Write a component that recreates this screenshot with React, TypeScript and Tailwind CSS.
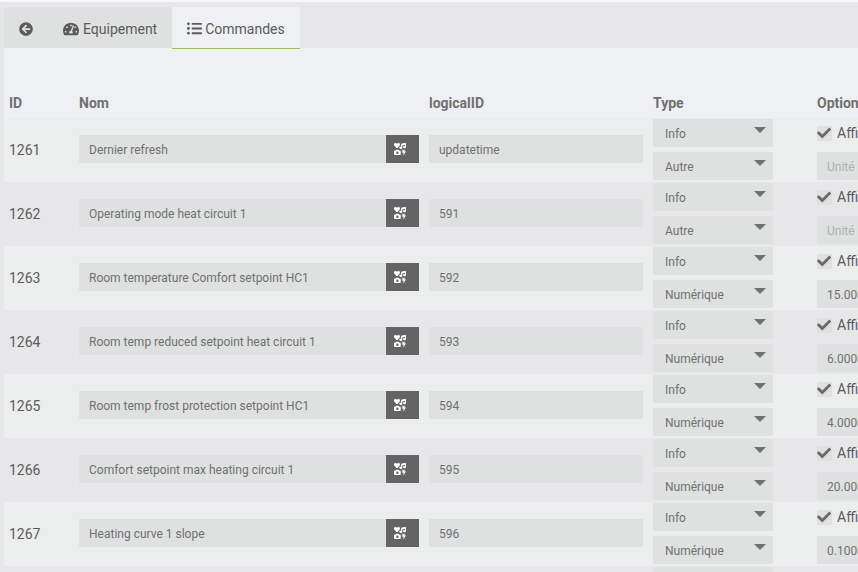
import { FaArrowCircleLeft, FaCheck, FaIcons, FaListUl, FaTachometerAlt } from "react-icons/fa";

type Command = {
  id: number;
  name: string;
  logicalId: string;
  subType: string;
  value: string;
};

const commands: Command[] = [
  { id: 1261, name: "Dernier refresh", logicalId: "updatetime", subType: "Autre", value: "" },
  { id: 1262, name: "Operating mode heat circuit 1", logicalId: "591", subType: "Autre", value: "" },
  { id: 1263, name: "Room temperature Comfort setpoint HC1", logicalId: "592", subType: "Numérique", value: "15.0000" },
  { id: 1264, name: "Room temp reduced setpoint heat circuit 1", logicalId: "593", subType: "Numérique", value: "6.0000" },
  { id: 1265, name: "Room temp frost protection setpoint HC1", logicalId: "594", subType: "Numérique", value: "4.0000" },
  { id: 1266, name: "Comfort setpoint max heating circuit 1", logicalId: "595", subType: "Numérique", value: "20.0000" },
  { id: 1267, name: "Heating curve 1 slope", logicalId: "596", subType: "Numérique", value: "0.1000" },
  { id: 1268, name: "Heating curve 1 shift", logicalId: "597", subType: "Numérique", value: "0.1000" },
];

const field =
  "block h-7 w-full bg-[#dfe1e0] px-[10px] pt-[2px] text-xs text-[#707070] outline-none placeholder:text-[#adafae]";

function Select({ label, value, options }: { label: string; value: string; options: string[] }) {
  return (
    <div className="relative w-[120px]">
      <select
        aria-label={label}
        defaultValue={value}
        className="block h-7 w-full appearance-none bg-[#dfe1e0] px-3 pt-[2px] text-xs text-[#707070] outline-none"
      >
        {options.map((option) => (
          <option key={option}>{option}</option>
        ))}
      </select>
      <svg viewBox="0 0 12 6" className="pointer-events-none absolute top-2 right-[7px] h-[6px] w-3 fill-[#707070]">
        <path d="M0 0h12L6 6z" />
      </svg>
    </div>
  );
}

function Row({ command }: { command: Command }) {
  return (
    <tr className="odd:bg-[#eceeed] even:bg-[#e7e7e9]">
      <td className="px-[5px] pt-px pb-[2px]">{command.id}</td>
      <td className="px-[5px] pt-px pb-1">
        <div className="flex">
          <input aria-label="Nom" defaultValue={command.name} className={field} />
          <button
            type="button"
            aria-label="Choisir une icône"
            className="flex h-7 w-[33px] shrink-0 items-center bg-[#646464] pl-2 text-white"
          >
            <FaIcons size={12} />
          </button>
        </div>
      </td>
      <td className="px-[5px] pt-px pb-1">
        <input aria-label="logicalID" defaultValue={command.logicalId} className={field} />
      </td>
      <td className="px-[5px] pt-px pb-[2px]">
        <div className="flex flex-col gap-[5px]">
          <Select label="Type" value="Info" options={["Info", "Action"]} />
          <Select label="Sous-type" value={command.subType} options={["Numérique", "Binaire", "Autre"]} />
        </div>
      </td>
      <td className="px-[5px] pt-px pb-[2px]">
        <div className="flex flex-col gap-[5px]">
          <label className="flex h-7 items-center gap-[5px]">
            <span className="grid size-[15px] place-items-center bg-[#dfe1e0]">
              <input type="checkbox" defaultChecked className="peer col-start-1 row-start-1 size-[15px] appearance-none" />
              <FaCheck
                size={14}
                className="pointer-events-none invisible col-start-1 row-start-1 justify-self-start text-[#6a6a6a] peer-checked:visible"
              />
            </span>
            Afficher
          </label>
          <input aria-label="Unité" placeholder="Unité" defaultValue={command.value} className={field} />
        </div>
      </td>
    </tr>
  );
}

export default function App() {
  return (
    <div className="h-screen overflow-hidden border-t-2 border-[#f6f7f9] bg-[#e7e7e9] pt-[5px] pl-1 font-[Roboto,sans-serif] text-sm text-[#5b5b5b]">
      <nav className="flex h-[41px]">
        <a href="#retour" aria-label="Retour" className="flex items-center bg-[#dfe1e0] px-[15px] pt-[2px]">
          <FaArrowCircleLeft size={14} />
        </a>
        <a href="#equipement" className="flex items-center gap-1 bg-[#dfe1e0] px-[15px] pt-[2px]">
          <FaTachometerAlt size={16} />
          Equipement
        </a>
        <a
          href="#commandes"
          className="flex h-[42px] items-center gap-[3px] border-b border-[#93cc1f] bg-[#eff0f3] px-[15px] pt-[2px]"
        >
          <FaListUl size={15} />
          Commandes
        </a>
      </nav>
      <main className="bg-[#eff0f3] pt-10">
        <table className="w-full min-w-[1200px] table-fixed border-collapse text-left">
          <colgroup>
            <col className="w-[70px]" />
            <col className="w-[350px]" />
            <col className="w-[224px]" />
            <col className="w-[164px]" />
            <col />
          </colgroup>
          <thead>
            <tr className="h-[30px] text-[#707070]">
              <th className="px-[5px]">ID</th>
              <th className="px-[5px]">Nom</th>
              <th className="px-[5px]">logicalID</th>
              <th className="px-[5px]">Type</th>
              <th className="px-[5px]">Options</th>
            </tr>
          </thead>
          <tbody>
            {commands.map((command) => (
              <Row key={command.id} command={command} />
            ))}
          </tbody>
        </table>
      </main>
    </div>
  );
}
